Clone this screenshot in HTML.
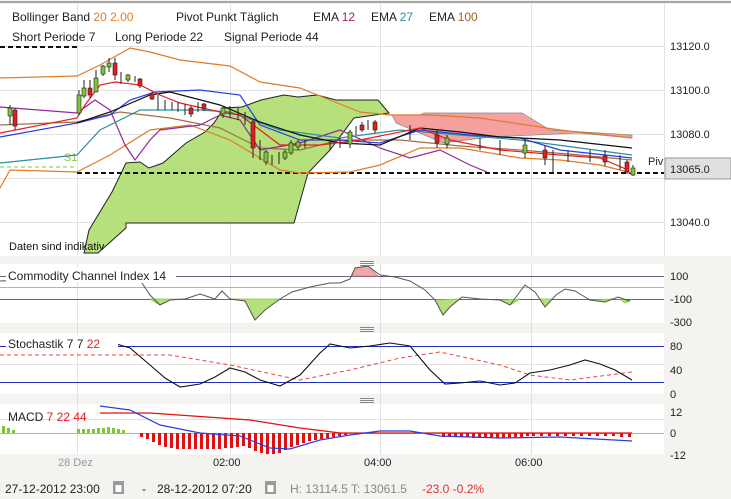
<!DOCTYPE html>
<html><head><meta charset="utf-8"><style>
body{margin:0;width:731px;height:499px;overflow:hidden;background:#f4f3f0;font-family:"Liberation Sans",sans-serif;}
svg{display:block}
text{font-family:"Liberation Sans",sans-serif}
</style></head><body>
<svg width="731" height="499" viewBox="0 0 731 499">
<rect x="0" y="0" width="731" height="499" fill="#f4f3f0"/>
<line x1="0" y1="2" x2="731" y2="2" stroke="#555" stroke-width="1"/>
<rect x="0" y="4" width="664" height="252" fill="#fff"/>
<rect x="664" y="4" width="67" height="252" fill="#fff"/>
<rect x="0" y="264" width="664" height="59" fill="#fff"/>
<rect x="0" y="333" width="664" height="61" fill="#fff"/>
<rect x="0" y="404" width="664" height="50" fill="#fff"/>
<g stroke="#e2e2e2" stroke-width="1">
<line x1="664.5" y1="4" x2="664.5" y2="256"/>
<line x1="77.5" y1="4" x2="77.5" y2="256"/><line x1="230.5" y1="4" x2="230.5" y2="256"/><line x1="380.5" y1="4" x2="380.5" y2="256"/><line x1="531.5" y1="4" x2="531.5" y2="256"/>
<line x1="0" y1="46.5" x2="664" y2="46.5"/><line x1="0" y1="90.5" x2="664" y2="90.5"/><line x1="0" y1="134.5" x2="664" y2="134.5"/><line x1="0" y1="178.5" x2="664" y2="178.5"/><line x1="0" y1="222.5" x2="664" y2="222.5"/>
<line x1="77.5" y1="264" x2="77.5" y2="454"/><line x1="230.5" y1="264" x2="230.5" y2="454"/><line x1="380.5" y1="264" x2="380.5" y2="454"/><line x1="531.5" y1="264" x2="531.5" y2="454"/>
<line x1="0" y1="364.5" x2="664" y2="364.5"/><line x1="0" y1="419.5" x2="664" y2="419.5"/>
</g>
<polygon fill="#b5e07c" stroke="#222" stroke-width="1" points="84,253 89,230 112,192 126,163 140,162 149,168 163,163 186,143 205,132 214,123 224,108 242,107 261,100 284,95 298,97 317,95 336,100 378,100 389,113 354,118 330,150 308,173 294,223 126,223 126,228 98,253"/>
<polygon fill="#f6a0a0" stroke="#888" stroke-width="0.7" points="392,115 420,115 424,113 522,113 550,130 632,135 632,138 578,133 490,137 443,143 396,123"/>
<line x1="0" y1="47" x2="77" y2="47" stroke="#111" stroke-width="2" stroke-dasharray="5,3"/>
<line x1="0" y1="167" x2="77" y2="167" stroke="#7fc53a" stroke-width="1" stroke-dasharray="4,3"/>
<line x1="77" y1="173" x2="664" y2="173" stroke="#111" stroke-width="2" stroke-dasharray="5,3"/>
<text x="64" y="161" font-size="11" fill="#7fc53a">S1</text>
<g fill="none" stroke-width="1.2">
<polyline stroke="#e07b28" points="0,78 77,76 100,65 130,48 150,52 180,60 230,66 260,82 300,88 330,100 360,112 390,115 430,115 480,118 520,124 560,130 632,138"/>
<polyline stroke="#e07b28" points="0,188 10,170 77,172 110,155 150,130 190,125 230,140 280,170 300,173 350,172 380,165 420,148 460,148 520,158 560,160 600,165 632,173"/>
<polyline stroke="#a07040" points="0,125 77,122 120,112 170,118 220,128 260,148 300,150 340,140 400,140 460,146 520,150 580,155 632,160"/>
<polyline stroke="#8e2a9a" points="0,107 77,113 95,100 110,110 125,145 135,160 150,140 160,130 200,125 220,115 240,120 260,150 300,143 340,130 380,148 410,158 440,150 470,165 487,172"/>
<polyline stroke="#2a8fa0" points="0,163 77,155 100,130 140,110 200,110 230,112 280,130 340,138 400,130 460,135 520,140 580,148 632,155"/>
<polyline stroke="#2a3ee0" points="0,137 77,123 110,115 130,100 155,92 200,90 240,95 260,125 300,140 340,140 380,143 420,130 470,135 520,138 560,150 632,158"/>
<polyline stroke="#111" points="77,123 110,112 150,95 170,92 220,105 260,122 300,135 340,143 380,145 420,128 460,132 500,137 560,140 632,148"/>
<polyline stroke="#e81c1c" points="0,133 77,118 85,105 100,85 115,82 140,85 160,95 180,103 220,112 240,115 280,145 320,145 360,140 420,128 450,140 500,150 560,155 600,158 628,170"/>
</g>
<g stroke="#222" stroke-width="1">
<line x1="10" y1="105" x2="10" y2="125"/><line x1="15" y1="108" x2="15" y2="130"/>
<line x1="79" y1="90" x2="79" y2="115"/><line x1="84" y1="80" x2="84" y2="98"/><line x1="90" y1="80" x2="90" y2="98"/><line x1="96" y1="70" x2="96" y2="92"/>
<line x1="103" y1="65" x2="103" y2="76"/><line x1="109" y1="58" x2="109" y2="72"/><line x1="115" y1="58" x2="115" y2="80"/><line x1="121" y1="72" x2="121" y2="84"/><line x1="128" y1="74" x2="128" y2="82"/><line x1="135" y1="76" x2="135" y2="82"/><line x1="140" y1="78" x2="140" y2="88"/>
<line x1="152" y1="92" x2="152" y2="100"/><line x1="158" y1="95" x2="158" y2="110"/><line x1="165" y1="100" x2="165" y2="110"/><line x1="172" y1="102" x2="172" y2="110"/><line x1="178" y1="102" x2="178" y2="112"/><line x1="185" y1="104" x2="185" y2="115"/><line x1="191" y1="106" x2="191" y2="117"/><line x1="198" y1="102" x2="198" y2="112"/><line x1="204" y1="103" x2="204" y2="111"/>
<line x1="223" y1="106" x2="223" y2="118"/><line x1="230" y1="106" x2="230" y2="118"/><line x1="238" y1="108" x2="238" y2="120"/><line x1="245" y1="112" x2="245" y2="125"/><line x1="253" y1="120" x2="253" y2="158"/><line x1="260" y1="140" x2="260" y2="160"/><line x1="266" y1="150" x2="266" y2="165"/><line x1="272" y1="155" x2="272" y2="165"/><line x1="279" y1="152" x2="279" y2="164"/><line x1="285" y1="150" x2="285" y2="160"/><line x1="291" y1="140" x2="291" y2="155"/><line x1="298" y1="140" x2="298" y2="150"/><line x1="305" y1="140" x2="305" y2="148"/>
<line x1="330" y1="140" x2="330" y2="150"/><line x1="340" y1="138" x2="340" y2="148"/><line x1="350" y1="130" x2="350" y2="148"/><line x1="356" y1="126" x2="356" y2="135"/><line x1="362" y1="122" x2="362" y2="132"/><line x1="368" y1="120" x2="368" y2="130"/><line x1="375" y1="120" x2="375" y2="133"/>
<line x1="410" y1="125" x2="410" y2="140"/><line x1="437" y1="130" x2="437" y2="148"/><line x1="447" y1="135" x2="447" y2="148"/><line x1="480" y1="138" x2="480" y2="150"/><line x1="500" y1="140" x2="500" y2="155"/><line x1="525" y1="140" x2="525" y2="158"/><line x1="545" y1="145" x2="545" y2="165"/><line x1="553" y1="150" x2="553" y2="172"/><line x1="568" y1="150" x2="568" y2="162"/><line x1="590" y1="150" x2="590" y2="162"/><line x1="605" y1="150" x2="605" y2="166"/><line x1="620" y1="155" x2="620" y2="170"/><line x1="627" y1="160" x2="627" y2="174"/><line x1="633" y1="165" x2="633" y2="176"/>
</g>
<g stroke="#222" stroke-width="0.6">
<rect x="8" y="108" width="4" height="8" fill="#7fc53a"/><rect x="13" y="110" width="4" height="16" fill="#e81c1c"/>
<rect x="77" y="95" width="4" height="18" fill="#7fc53a"/><rect x="82" y="88" width="4" height="8" fill="#7fc53a"/><rect x="88" y="88" width="4" height="7" fill="#e81c1c"/><rect x="94" y="78" width="4" height="14" fill="#7fc53a"/><rect x="101" y="66" width="4" height="8" fill="#7fc53a"/><rect x="107" y="63" width="4" height="4" fill="#7fc53a"/><rect x="113" y="63" width="4" height="12" fill="#e81c1c"/><rect x="126" y="75" width="4" height="5" fill="#7fc53a"/><rect x="138" y="79" width="4" height="7" fill="#e81c1c"/><rect x="150" y="94" width="4" height="5" fill="#e81c1c"/><rect x="189" y="108" width="4" height="6" fill="#e81c1c"/><rect x="202" y="104" width="4" height="5" fill="#e81c1c"/>
<rect x="221" y="108" width="4" height="6" fill="#7fc53a"/><rect x="251" y="122" width="4" height="26" fill="#e81c1c"/><rect x="264" y="152" width="4" height="10" fill="#7fc53a"/><rect x="283" y="152" width="4" height="6" fill="#7fc53a"/><rect x="289" y="143" width="4" height="10" fill="#7fc53a"/><rect x="296" y="142" width="4" height="5" fill="#7fc53a"/>
<rect x="348" y="132" width="4" height="12" fill="#7fc53a"/><rect x="360" y="125" width="4" height="5" fill="#e81c1c"/><rect x="373" y="122" width="4" height="8" fill="#e81c1c"/><rect x="435" y="135" width="4" height="8" fill="#e81c1c"/><rect x="445" y="138" width="4" height="6" fill="#7fc53a"/><rect x="523" y="145" width="4" height="8" fill="#7fc53a"/><rect x="543" y="150" width="4" height="8" fill="#e81c1c"/><rect x="603" y="156" width="4" height="6" fill="#e81c1c"/><rect x="625" y="162" width="4" height="10" fill="#e81c1c"/><rect x="631" y="168" width="4" height="7" fill="#7fc53a"/>
</g>
<g font-size="12" fill="#222">
<text x="12" y="21">Bollinger Band <tspan fill="#e07b28">20</tspan> <tspan fill="#e07b28">2.00</tspan></text>
<text x="176" y="21">Pivot Punkt  Täglich</text>
<text x="313" y="21">EMA <tspan fill="#a01a6a">12</tspan></text>
<text x="371" y="21">EMA <tspan fill="#2a8fa0">27</tspan></text>
<text x="429" y="21">EMA <tspan fill="#a06020">100</tspan></text>
<text x="12" y="41">Short Periode  7</text>
<text x="115" y="41">Long Periode  22</text>
<text x="224" y="41">Signal Periode  44</text>
</g>
<text x="9" y="250" font-size="11" fill="#111">Daten sind indikativ</text>
<g font-size="11" fill="#222">
<text x="670" y="50">13120.0</text><text x="670" y="94">13100.0</text><text x="670" y="138">13080.0</text><text x="670" y="226">13040.0</text>
<text x="648" y="165">Piv</text>
</g>
<rect x="665" y="158" width="66" height="21" fill="#e0e0e0" stroke="#999"/>
<text x="670" y="173" font-size="11" fill="#222">13065.0</text>
<g stroke="#888" stroke-width="1">
<line x1="360" y1="261.5" x2="374" y2="261.5"/><line x1="360" y1="263.5" x2="374" y2="263.5"/><line x1="360" y1="265.5" x2="374" y2="265.5"/>
<line x1="360" y1="327.5" x2="374" y2="327.5"/><line x1="360" y1="329.5" x2="374" y2="329.5"/><line x1="360" y1="331.5" x2="374" y2="331.5"/>
<line x1="360" y1="398.5" x2="374" y2="398.5"/><line x1="360" y1="400.5" x2="374" y2="400.5"/><line x1="360" y1="402.5" x2="374" y2="402.5"/>
</g>
<line x1="0" y1="276.5" x2="664" y2="276.5" stroke="#666680"/>
<line x1="0" y1="287.5" x2="664" y2="287.5" stroke="#aab4c0"/>
<line x1="0" y1="299.5" x2="664" y2="299.5" stroke="#666680"/>
<g fill="#b5e07c" stroke="#7fc53a" stroke-width="0.8">
<polygon points="150,299 160,305 170,300 185,299"/>
<polygon points="230,299 245,301 255,320 265,310 280,299"/>
<polygon points="435,300 443,315 450,307 460,299"/>
<polygon points="500,300 510,305 520,299"/>
<polygon points="540,299 545,307 552,299"/>
<polygon points="590,300 605,302 612,299"/><polygon points="620,299 625,303 630,301"/>
</g>
<polygon points="352,276 355,268 368,266 378,276" fill="#f0a8a8" stroke="#d08080" stroke-width="0.8"/>
<polyline fill="none" stroke="#555" stroke-width="1" points="0,281 77,278 100,269 120,268 140,280 150,295 160,305 170,300 185,299 200,294 215,299 222,291 230,299 245,301 255,320 265,310 280,299 292,292 310,287 330,283 340,283 350,279 355,268 368,266 380,275 395,277 410,281 425,290 435,300 443,315 450,307 462,297 480,299 500,300 510,305 525,285 535,292 545,307 556,295 565,289 575,291 585,297 590,300 605,302 618,297 630,301"/>
<rect x="6" y="267" width="170" height="16" fill="#fff"/>
<text x="8" y="280" font-size="12" fill="#222">Commodity Channel Index  14</text>
<g font-size="11" fill="#222"><text x="670" y="280">100</text><text x="670" y="303">-100</text><text x="670" y="326">-300</text></g>
<line x1="0" y1="346.5" x2="664" y2="346.5" stroke="#2030c0"/>
<line x1="0" y1="382.5" x2="664" y2="382.5" stroke="#2030c0"/>
<polyline fill="none" stroke="#f04040" stroke-width="1" stroke-dasharray="4,3" points="0,355 150,355 170,355 230,365 300,380 350,370 400,358 440,352 500,365 530,375 570,380 632,372"/>
<polyline fill="none" stroke="#111" stroke-width="1.1" points="110,342 130,348 150,365 165,378 180,387 200,384 215,377 230,368 245,372 260,380 280,386 300,375 320,353 330,344 350,348 370,346 390,343 410,346 430,370 445,384 460,383 480,381 500,385 515,383 530,373 550,370 570,365 585,360 600,364 615,370 632,380"/>
<rect x="6" y="336" width="112" height="16" fill="#fff"/>
<text x="8" y="348" font-size="12" fill="#222">Stochastik  7  7  <tspan fill="#e81c1c">22</tspan></text>
<g font-size="11" fill="#222"><text x="670" y="350">80</text><text x="670" y="374">40</text><text x="670" y="398">0</text></g>
<line x1="0" y1="433.5" x2="664" y2="433.5" stroke="#aab4c0"/>
<g fill="#7fc53a"><rect x="2" y="426" width="3" height="7"/><rect x="7" y="428" width="3" height="5"/><rect x="12" y="430" width="3" height="3"/>
<rect x="77" y="429" width="3" height="4"/><rect x="82" y="429" width="3" height="4"/><rect x="87" y="429" width="3" height="4"/><rect x="92" y="429" width="3" height="4"/><rect x="97" y="428" width="3" height="5"/><rect x="102" y="428" width="3" height="5"/><rect x="107" y="427" width="3" height="6"/><rect x="112" y="428" width="3" height="5"/><rect x="117" y="429" width="3" height="4"/><rect x="122" y="430" width="3" height="3"/></g>
<g fill="#e01010">
<rect x="140" y="433" width="3" height="4"/><rect x="146" y="433" width="3" height="6"/><rect x="152" y="433" width="3" height="9"/><rect x="158" y="433" width="3" height="12"/><rect x="164" y="433" width="3" height="14"/><rect x="170" y="433" width="3" height="15"/><rect x="176" y="433" width="3" height="16"/><rect x="182" y="433" width="3" height="16"/><rect x="188" y="433" width="3" height="16"/><rect x="194" y="433" width="3" height="16"/><rect x="200" y="433" width="3" height="16"/><rect x="206" y="433" width="3" height="16"/><rect x="212" y="433" width="3" height="16"/><rect x="218" y="433" width="3" height="16"/><rect x="224" y="433" width="3" height="15"/><rect x="230" y="433" width="3" height="15"/><rect x="236" y="433" width="3" height="14"/><rect x="242" y="433" width="3" height="13"/><rect x="248" y="433" width="3" height="15"/><rect x="254" y="433" width="3" height="18"/><rect x="260" y="433" width="3" height="20"/><rect x="266" y="433" width="3" height="21"/><rect x="272" y="433" width="3" height="21"/><rect x="278" y="433" width="3" height="20"/><rect x="284" y="433" width="3" height="17"/><rect x="290" y="433" width="3" height="14"/><rect x="296" y="433" width="3" height="12"/><rect x="302" y="433" width="3" height="10"/><rect x="308" y="433" width="3" height="8"/><rect x="314" y="433" width="3" height="7"/><rect x="320" y="433" width="3" height="6"/><rect x="326" y="433" width="3" height="5"/><rect x="332" y="433" width="3" height="4"/><rect x="338" y="433" width="3" height="3"/><rect x="344" y="433" width="3" height="2"/>
<rect x="442" y="433" width="3" height="4"/><rect x="448" y="433" width="3" height="4"/><rect x="454" y="433" width="3" height="4"/><rect x="460" y="433" width="3" height="4"/><rect x="466" y="433" width="3" height="4"/><rect x="472" y="433" width="3" height="5"/><rect x="478" y="433" width="3" height="5"/><rect x="484" y="433" width="3" height="5"/><rect x="490" y="433" width="3" height="5"/><rect x="496" y="433" width="3" height="5"/><rect x="502" y="433" width="3" height="5"/><rect x="508" y="433" width="3" height="5"/><rect x="514" y="433" width="3" height="4"/><rect x="520" y="433" width="3" height="4"/><rect x="526" y="433" width="3" height="3"/><rect x="532" y="433" width="3" height="3"/><rect x="540" y="433" width="3" height="3"/><rect x="548" y="433" width="3" height="3"/><rect x="556" y="433" width="3" height="3"/><rect x="564" y="433" width="3" height="3"/><rect x="572" y="433" width="3" height="3"/><rect x="580" y="433" width="3" height="3"/><rect x="588" y="433" width="3" height="3"/><rect x="596" y="433" width="3" height="3"/><rect x="604" y="433" width="3" height="3"/><rect x="612" y="433" width="3" height="3"/><rect x="620" y="433" width="3" height="4"/><rect x="628" y="433" width="3" height="4"/>
</g>
<polyline fill="none" stroke="#e01010" stroke-width="1.2" points="100,413 150,413 250,420 300,428 340,433 632,433"/>
<polyline fill="none" stroke="#2a3ee0" stroke-width="1.2" points="100,406 130,410 160,425 200,433 240,436 270,448 290,449 320,440 350,435 380,431 410,431 440,436 500,438 560,437 632,441"/>
<text x="8" y="421" font-size="12" fill="#222">MACD  <tspan fill="#e81c1c">7  22  44</tspan></text>
<g font-size="11" fill="#222"><text x="670" y="416">12</text><text x="670" y="437">0</text><text x="670" y="459">-12</text></g>
<g font-size="11"><text x="58" y="466" fill="#999">28 Dez</text><text x="213" y="466" fill="#222">02:00</text><text x="364" y="466" fill="#222">04:00</text><text x="515" y="466" fill="#222">06:00</text></g>
<g font-size="12" fill="#222">
<text x="5" y="493">27-12-2012 23:00</text>
<rect x="113" y="481" width="11" height="13" fill="#999"/><rect x="115.5" y="485" width="6" height="7" fill="#fff"/>
<text x="142" y="493">-</text>
<text x="157" y="493">28-12-2012 07:20</text>
<rect x="265" y="481" width="11" height="13" fill="#999"/><rect x="267.5" y="485" width="6" height="7" fill="#fff"/>
<text x="290" y="493" fill="#888">H: 13114.5   T: 13061.5</text>
<text x="422" y="493" fill="#e03030">-23.0  -0.2%</text>
</g>
</svg>
</body></html>
